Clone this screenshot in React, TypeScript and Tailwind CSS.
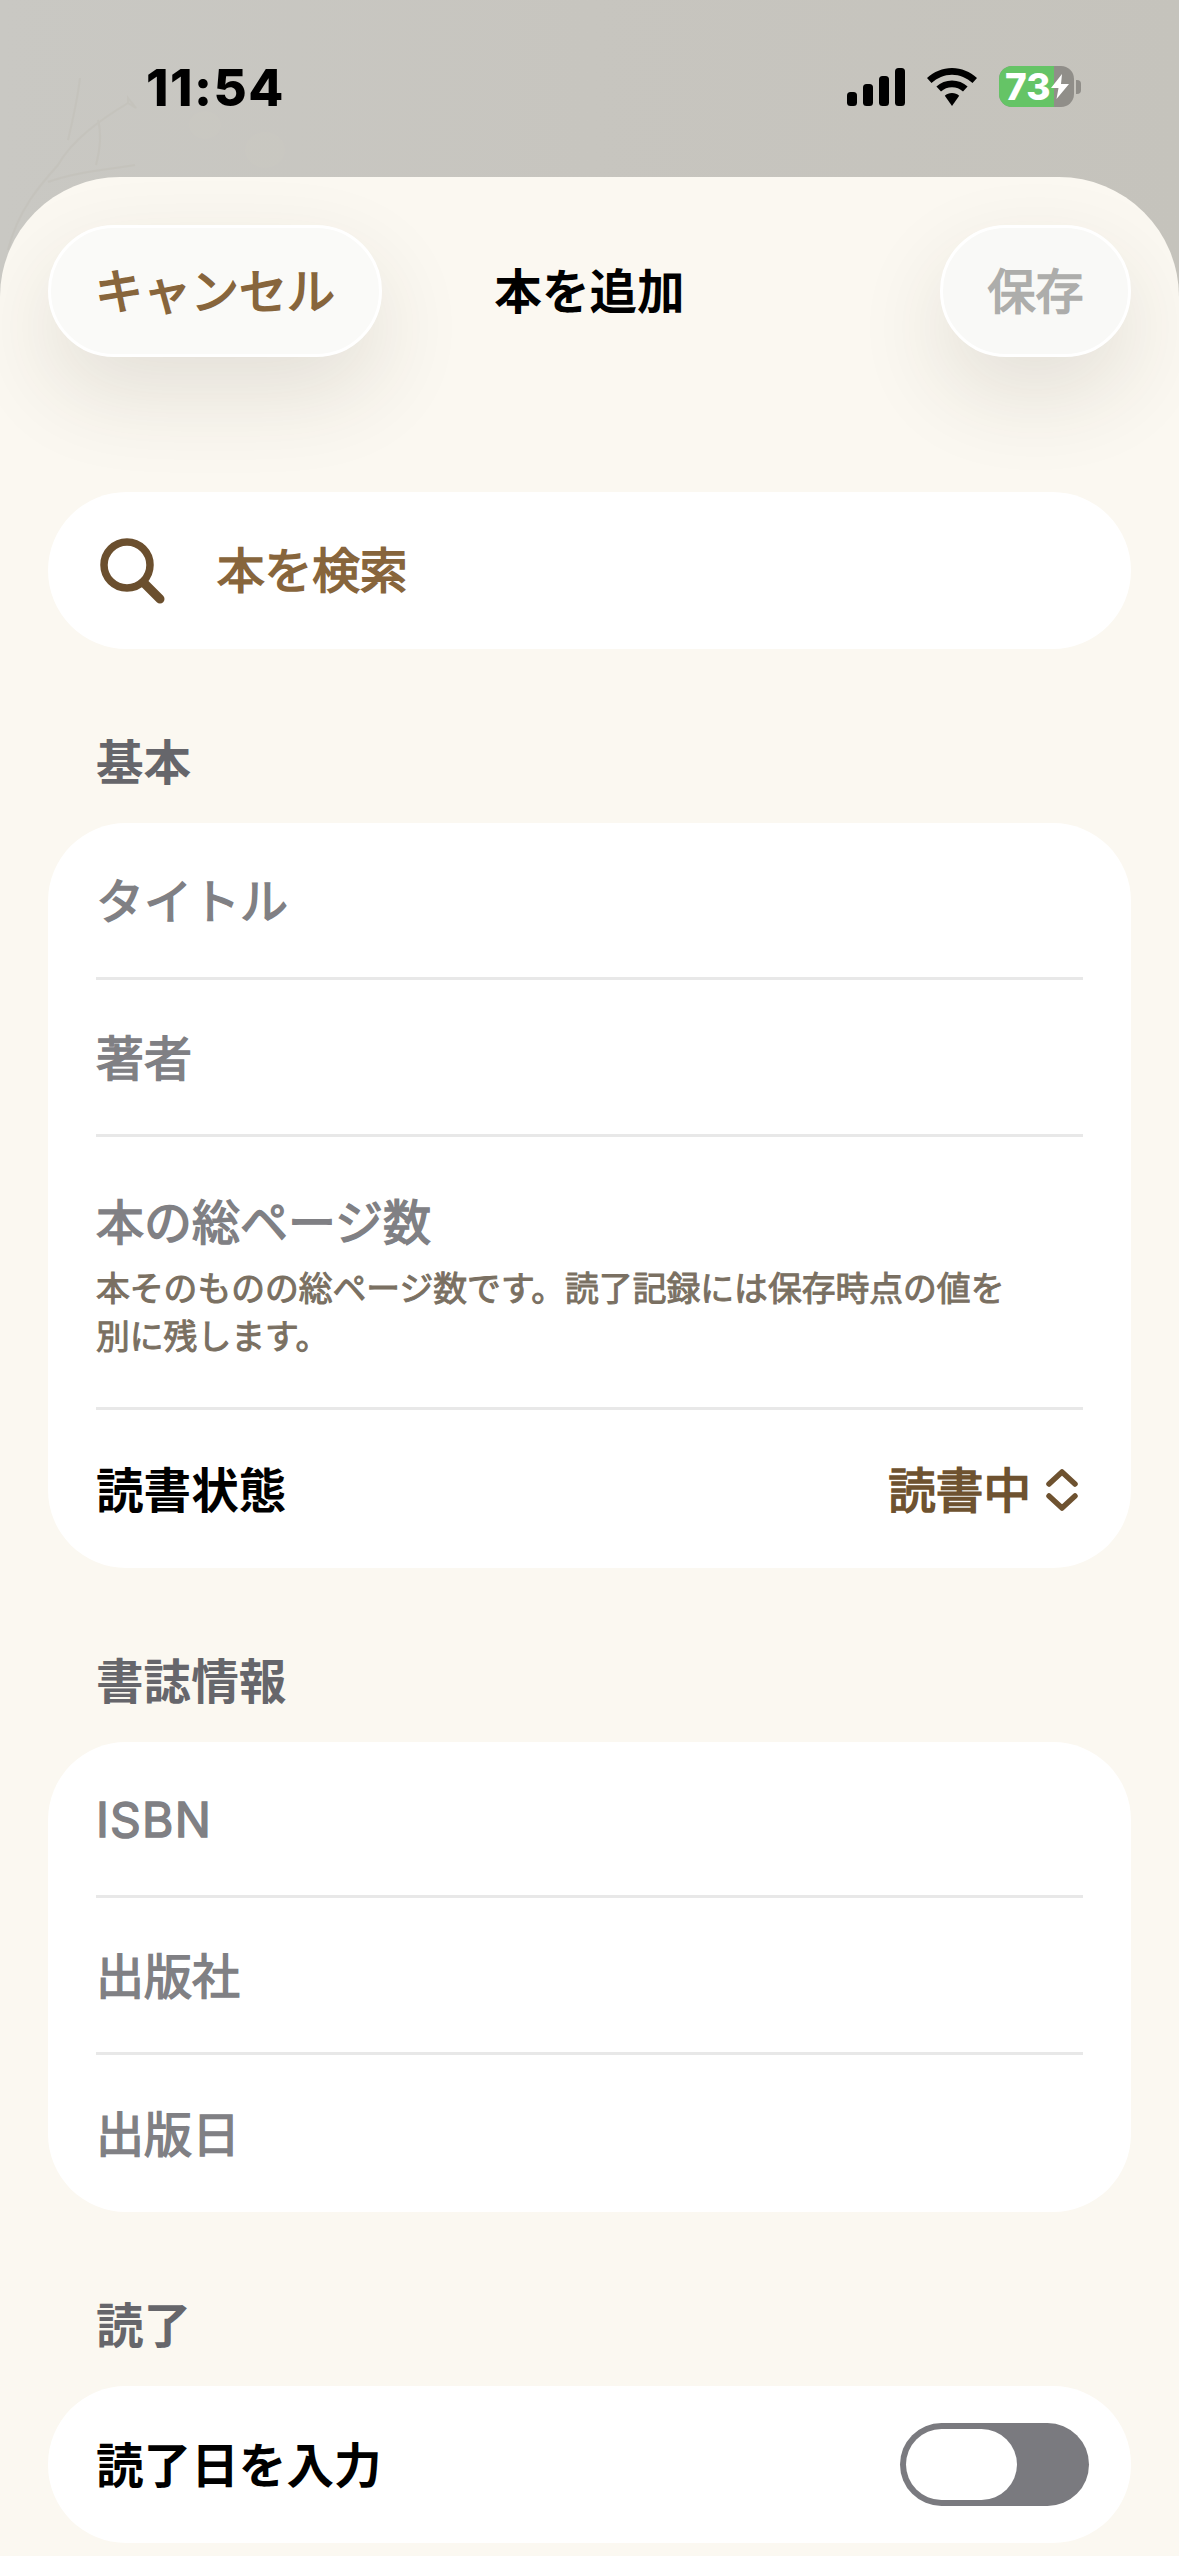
import React from "react";

const Divider = () => <div className="mx-[48px] h-[3px] bg-[#e8e8e8]" />;

const Placeholder = ({ label, height = "h-[154px]" }: { label: string; height?: string }) => (
  <div
    className={`flex items-center px-[48px] pt-[3px] text-[48px] font-normal leading-[60px] text-[#808084] [-webkit-text-stroke:1.5px_#808084] ${height}`}>
    {label}
  </div>
);

const SectionLabel = ({ label }: { label: string }) => (
  <h2 className="mb-[31px] mt-[85px] px-[96px] text-[47.6px] font-bold leading-[58px] text-[#66666b]">
    {label}
  </h2>
);

const Card = ({ children }: { children: React.ReactNode }) => (
  <div className="mx-[48px] overflow-hidden rounded-[78px] bg-white">{children}</div>
);

const Wallpaper = () => (
  <svg
    className="absolute left-0 top-0 h-[300px] w-[1179px]"
    viewBox="0 0 1179 300"
    fill="none"
    stroke="#bfbcb3"
    strokeWidth="2"
    opacity="0.35">
    <path d="M8 250 C18 210 40 185 58 165 C72 140 100 120 128 103" />
    <path d="M48 182 C75 172 105 170 135 165" />
    <path d="M68 140 C74 115 78 95 80 78" />
    <path d="M98 120 C102 135 100 150 96 165" />
    <path d="M128 103 L136 108 L128 98 Z" />
    <ellipse cx="205" cy="125" rx="16" ry="14" fill="#cdcac3" stroke="none" />
    <ellipse cx="265" cy="150" rx="20" ry="18" fill="#cdcac3" stroke="none" />
  </svg>
);

const StatusBar = () => (
  <div className="relative flex h-[177px] items-start justify-between pl-[146px] pr-[98px] pt-[62px]">
    <span className="font-['Inter',sans-serif] text-[51px] font-extrabold leading-[52px] tracking-[1.5px] text-black">
      11:54
    </span>
    <div className="flex items-center gap-[22px] pt-[4px]">
      <svg width="58" height="38" viewBox="0 0 58 38" fill="black">
        <rect x="0" y="24" width="10" height="14" rx="3.5" />
        <rect x="16" y="16" width="10" height="22" rx="3.5" />
        <rect x="32" y="8" width="10" height="30" rx="3.5" />
        <rect x="48" y="0" width="10" height="38" rx="3.5" />
      </svg>
      <svg width="50" height="38" viewBox="0 0 50 38" fill="black">
        <path d="M25 0 C34.5 0 43 3.7 50 10 L45.5 15 C39.8 9.8 32.7 6.7 25 6.7 C17.3 6.7 10.2 9.8 4.500 15 L0 10 C7 3.700 15.500 0 25 0 Z" />
        <path d="M25 12.500 C31 12.500 36.300 14.800 40.600 18.600 L36 23.500 C33 20.800 29.200 19.300 25 19.300 C20.800 19.300 17 20.800 14 23.500 L9.400 18.600 C13.700 14.800 19 12.500 25 12.500 Z" />
        <path d="M25 25 C27.800 25 30.300 26 32.200 27.800 L25 38 L17.800 27.800 C19.700 26 22.200 25 25 25 Z" />
      </svg>
      <div className="flex items-center gap-[2px]">
        <div className="relative flex h-[41px] w-[75px] rounded-[13px] bg-[#908e89]">
          <div className="h-full w-[55px] rounded-l-[13px] bg-[#65c466]" />
          <span className="absolute left-[6px] top-0 font-['Inter',sans-serif] text-[37px] font-extrabold leading-[41px] text-white">
            73
          </span>
          <svg className="absolute left-[52px] top-[8px]" width="18" height="25" viewBox="0 0 18 25" fill="white">
            <path d="M11 0 L0 14 L7.500 14 L5.500 25 L18 10 L10 10 Z" />
          </svg>
        </div>
        <div className="h-[14px] w-[5px] rounded-r-[4px] bg-[#908e89]" />
      </div>
    </div>
  </div>
);

const Header = () => (
  <div className="grid grid-cols-[1fr_auto_1fr] items-center px-[48px] pt-[48px]">
    <button className="flex h-[132px] w-[334px] items-center justify-center justify-self-start rounded-full border-[3px] border-white bg-[#fafaf8] pt-[2px] text-[48px] font-normal text-[#87653c] shadow-[0_36px_90px_rgba(60,50,30,0.12)] [-webkit-text-stroke:1.7px_#87653c]">
      キャンセル
    </button>
    <h1 className="pt-[2px] text-[47.6px] font-bold text-black">本を追加</h1>
    <button className="flex h-[132px] w-[191px] items-center justify-center justify-self-end rounded-full border-[3px] border-white bg-[#f9f9f7] pt-[2px] text-[48px] font-normal text-[#adadab] shadow-[0_36px_90px_rgba(60,50,30,0.12)] [-webkit-text-stroke:1.7px_#adadab]">
      保存
    </button>
  </div>
);

const SearchBar = () => (
  <div className="mx-[48px] mt-[135px] flex h-[157px] items-center gap-[51px] rounded-full bg-white pl-[52px]">
    <svg width="66" height="66" viewBox="0 0 66 66" fill="none" stroke="#6b4f2e">
      <circle cx="27" cy="27" r="23" strokeWidth="7.500" />
      <path d="M44 45 L60 61" strokeWidth="9" strokeLinecap="round" />
    </svg>
    <span className="text-[47.6px] font-normal leading-[60px] text-[#87653c] [-webkit-text-stroke:1.7px_#87653c]">
      本を検索
    </span>
  </div>
);

const App = () => {
  return (
    <div className="relative flex h-[2556px] w-[1179px] flex-col overflow-hidden bg-gradient-to-r from-[#c9c8c3] via-[#c7c5bf] to-[#c5c3bc] font-['Inter','Noto_Sans_CJK_JP',sans-serif]">
      <Wallpaper />
      <StatusBar />

      <div className="relative flex-1 overflow-hidden rounded-t-[120px] bg-[#fbf8f1]">
        <Header />
        <SearchBar />

        <SectionLabel label="基本" />
        <Card>
          <Placeholder label="タイトル" />
          <Divider />
          <Placeholder label="著者" />
          <Divider />
          <div className="h-[270px] px-[48px] pt-[56px]">
            <p className="text-[48px] font-normal leading-[60px] text-[#808084] [-webkit-text-stroke:1.5px_#808084]">
              本の総ページ数
            </p>
            <p className="mt-[12px] max-w-[930px] text-[33.8px] font-normal leading-[48px] text-[#7a7062] [-webkit-text-stroke:1px_#7a7062]">
              本そのものの総ページ数です。読了記録には保存時点の値を別に残します。
            </p>
          </div>
          <Divider />
          <div className="flex h-[158px] items-center justify-between pl-[48px] pr-[52px] pt-[3px] text-[47.6px] font-bold">
            <span className="text-black">読書状態</span>
            <div className="flex items-center gap-[14px] text-[#6e5230]">
              <span className="font-normal [-webkit-text-stroke:1.7px_#6e5230]">読書中</span>
              <svg width="34" height="42" viewBox="0 0 34 42" fill="none" stroke="#6e5230" strokeWidth="5.500" strokeLinecap="round" strokeLinejoin="round">
                <path d="M4 15 L17 3 L30 15" />
                <path d="M4 27 L17 39 L30 27" />
              </svg>
            </div>
          </div>
        </Card>

        <SectionLabel label="書誌情報" />
        <Card>
          <div className="tracking-[1.2px]">
            <Placeholder label="ISBN" height="h-[153px]" />
          </div>
          <Divider />
          <Placeholder label="出版社" />
          <Divider />
          <Placeholder label="出版日" height="h-[157px]" />
        </Card>

        <SectionLabel label="読了" />
        <Card>
          <div className="flex h-[157px] items-center justify-between pl-[48px] pr-[42px] text-[47.6px] font-bold text-black">
            <span className="pt-[3px]">読了日を入力</span>
            <div className="h-[83px] w-[189px] rounded-full bg-[#7a7a7f] p-[6px]">
              <div className="h-[71px] w-[111px] rounded-full bg-white" />
            </div>
          </div>
        </Card>
      </div>
    </div>
  );
};

export default App;
